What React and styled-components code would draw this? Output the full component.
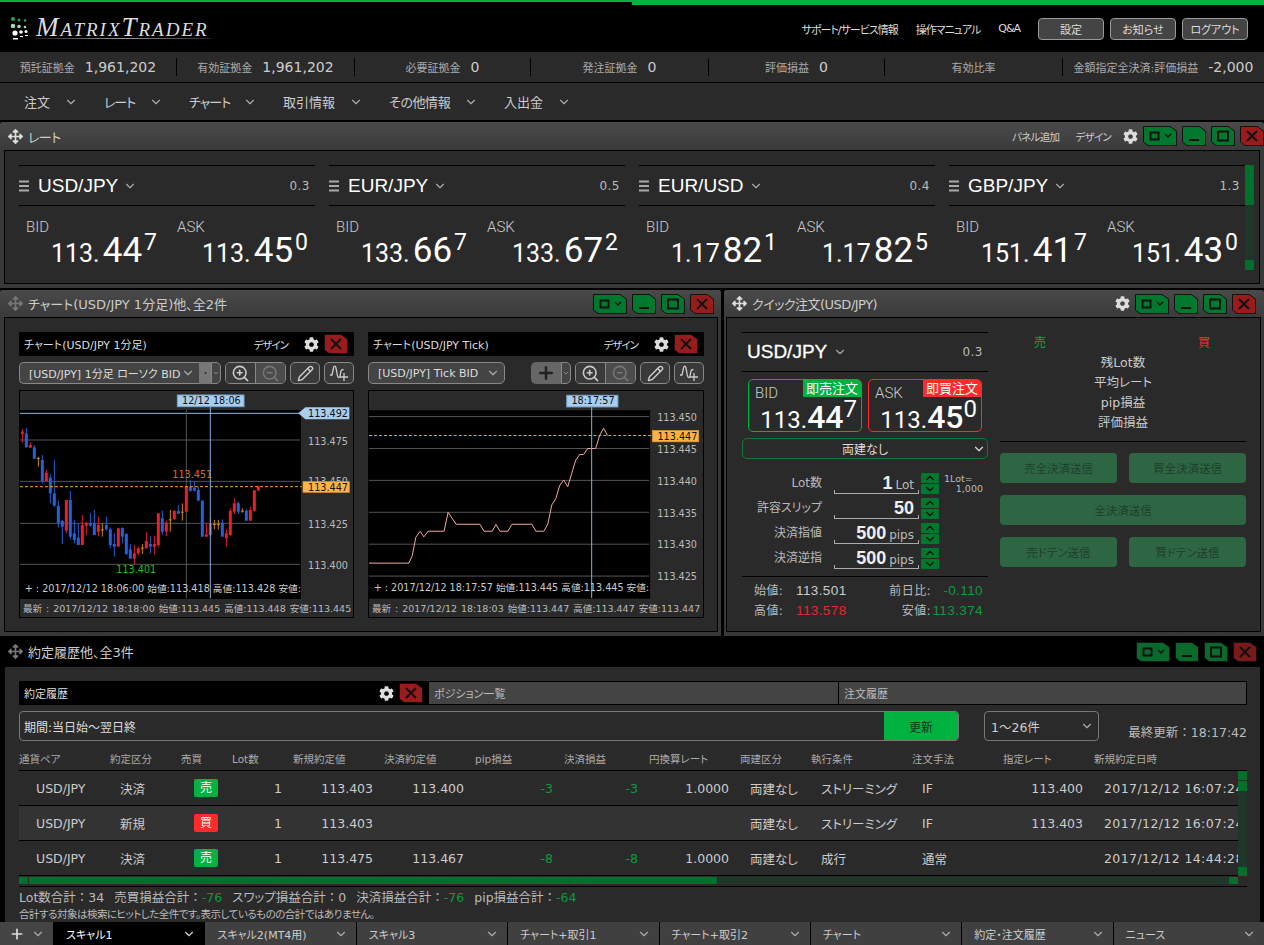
import styled, { createGlobalStyle } from 'styled-components';
import { ChevronDown, ZoomIn, ZoomOut, Pencil, Plus } from 'lucide-react';
import { FaCog, FaArrowsAlt } from 'react-icons/fa';

const FONT = `"DejaVu Sans", "Noto Sans CJK JP", sans-serif`;
const ARIAL = `"Liberation Sans", "Noto Sans CJK JP", sans-serif`;
const THIN = `Roboto, "Liberation Sans", sans-serif`;
const GREEN = '#00b341';
const RED = '#ff2a2a';

const Global = createGlobalStyle`
  html, body { margin: 0; padding: 0; background: #000; }
  body { font-family: ${FONT}; font-feature-settings: "palt"; color: #ccc; }
  * { box-sizing: border-box; }
`;

const stats = [
  ['預託証拠金', '1,961,202'], ['有効証拠金', '1,961,202'], ['必要証拠金', '0'], ['発注証拠金', '0'],
  ['評価損益', '0'], ['有効比率', ''], ['金額指定全決済:評価損益', '-2,000'],
];
// label, letter spacing, width of the label
const menus = [['注文', 0, 26], ['レート', -1, 31], ['チャート', -1, 40], ['取引情報', 0, 52], ['その他情報', -.4, 61], ['入出金', 0, 39]];
const rates = [
  { pair: 'USD/JPY', spread: '0.3', bid: ['113.', '44', '7'], ask: ['113.', '45', '0'] },
  { pair: 'EUR/JPY', spread: '0.5', bid: ['133.', '66', '7'], ask: ['133.', '67', '2'] },
  { pair: 'EUR/USD', spread: '0.4', bid: ['1.17', '82', '1'], ask: ['1.17', '82', '5'] },
  { pair: 'GBP/JPY', spread: '1.3', bid: ['151.', '41', '7'], ask: ['151.', '43', '0'] },
];
const heads = ['通貨ペア', '約定区分', '売買', 'Lot数', '新規約定値', '決済約定値', 'pip損益', '決済損益', '円換算レート', '両建区分', '執行条件', '注文手法', '指定レート', '新規約定日時'];
const trades = [
  ['USD/JPY', '決済', '売', '1', '113.403', '113.400', '-3', '-3', '1.0000', '両建なし', 'ストリーミング', 'IF', '113.400', '2017/12/12 16:07:24'],
  ['USD/JPY', '新規', '買', '1', '113.403', '', '', '', '', '両建なし', 'ストリーミング', 'IF', '113.403', '2017/12/12 16:07:24'],
  ['USD/JPY', '決済', '売', '1', '113.475', '113.467', '-8', '-8', '1.0000', '両建なし', '成行', '通常', '', '2017/12/12 14:44:28'],
];
const tabs = ['スキャル1', 'スキャル2(MT4用)', 'スキャル3', 'チャート+取引1', 'チャート+取引2', 'チャート', '約定・注文履歴', 'ニュース'];

// x, wick top, wick bottom, body top, body bottom, colour (coords are 3x the page)
const candles = [
  [67,418,458,425,432,'r'],[79,413,472,430,472,'b'],[91,457,473,465,473,'r'],[103,465,506,472,506,'b'],[115,500,530,504,506,'o'],
  [127,495,580,510,573,'b'],[139,540,575,548,573,'r'],[151,552,640,563,610,'b'],[163,510,650,610,647,'b'],[175,632,712,648,700,'b'],
  [187,690,762,693,710,'b'],[199,630,730,630,722,'r'],[211,603,748,630,740,'b'],[223,690,760,730,750,'b'],[235,700,765,743,765,'b'],
  [247,675,765,705,765,'r'],[259,695,735,700,707,'r'],[271,670,710,700,707,'b'],[283,660,735,700,735,'b'],[295,680,738,705,725,'r'],
  [307,700,740,718,720,'o'],[319,680,722,705,718,'b'],[331,712,775,718,765,'b'],[343,730,800,762,770,'b'],[355,713,770,715,770,'r'],
  [367,712,760,714,740,'b'],[379,730,795,732,792,'b'],[391,762,806,778,806,'b'],[403,765,822,790,806,'r'],[415,770,795,775,790,'r'],
  [427,762,792,773,775,'o'],[439,725,775,753,775,'r'],[451,738,790,762,770,'b'],[463,738,793,762,770,'r'],[475,670,772,670,765,'r'],
  [487,662,735,685,725,'b'],[499,692,738,698,725,'r'],[511,660,725,688,690,'o'],[523,660,690,663,687,'r'],[535,645,672,663,671,'b'],
  [547,640,692,665,667,'o'],[559,590,665,590,665,'r'],[571,570,605,590,603,'b'],[583,575,605,593,602,'b'],[595,590,632,600,632,'b'],
  [607,630,740,632,740,'b'],[619,700,740,733,740,'r'],[631,685,738,700,735,'r'],[643,690,718,702,704,'o'],[655,690,718,702,704,'o'],
  [667,688,740,698,740,'b'],[679,718,770,730,745,'r'],[691,655,738,663,735,'r'],[703,625,672,640,665,'r'],[715,635,672,640,665,'b'],
  [727,655,668,662,664,'o'],[739,658,692,662,692,'b'],[751,650,692,660,692,'r'],[763,600,665,601,662,'r'],[775,587,602,590,602,'r'],
];
const candleColors = { r: '#e5202a', b: '#2560d8', o: '#c98a10' };
const tickLine = '27,820 147,820 157,798 168,742 181,724 192,741 205,724 253,724 265,667 289,703 361,703 373,724 398,724 409,703 421,724 445,724 457,703 517,703 529,724 553,724 565,703 577,645 589,626 601,586 613,570 625,590 649,510 661,493 673,493 685,475 709,475 721,436 733,414 745,436';

function Gear({ size = 15 }) {
  return <GearWrap><FaCog size={size} /></GearWrap>;
}

function Chev({ size = 14, color = '#aaa' }) {
  return <ChevronDown size={size} color={color} strokeWidth={2} />;
}

function WinBtn({ kind, w = 24, dim }) {
  const fill = kind === 'close' ? (dim ? '#7c1a1a' : '#991b1b') : (dim ? '#0a6a2c' : '#00792e');
  return (
    <svg width={w} height="20" viewBox={`0 0 ${w} 20`}>
      <polygon points={`0.5,0.5 ${w - 7},0.5 ${w - 0.5},5 ${w - 0.5},19.5 5,19.5 0.5,16`} fill={fill} stroke="#111" />
      {kind === 'layout' && <>
        <rect x="7.5" y="6.5" width="8" height="7" fill="none" stroke="#111" strokeWidth="2" />
        <path d="M22 8l3 3 3-3" fill="none" stroke="#111" strokeWidth="1.4" />
      </>}
      {kind === 'min' && <rect x="7" y="13" width="10" height="2" fill="#111" />}
      {kind === 'max' && <rect x="7" y="5.5" width="10" height="9" fill="none" stroke="#111" strokeWidth="2" />}
      {kind === 'close' && <path d="M7 5l10 10M17 5L7 15" stroke="#111" strokeWidth="2" />}
    </svg>
  );
}

function WinButtons({ dim }) {
  return (
    <WinGroup>
      <WinBtn kind="layout" w={34} dim={dim} />
      <WinBtn kind="min" dim={dim} />
      <WinBtn kind="max" dim={dim} />
      <WinBtn kind="close" dim={dim} />
    </WinGroup>
  );
}

function Hamburger() {
  return (
    <svg width="10" height="12" viewBox="0 0 10 12">
      <path d="M0 1.5h10M0 6h10M0 10.5h10" stroke="#aaa" strokeWidth="1.8" />
    </svg>
  );
}

function DrawIcon() {
  return (
    <svg width="20" height="18" viewBox="0 0 20 18" fill="none" stroke="#ccc" strokeWidth="1.3">
      <path d="M1 11h2l1.500-7c.5-2.500 2-2.500 2.500 0l1.500 8c.4 2 2 2 2.500 0l1-5c.3-1.500 1.500-1.500 2.500-1.500" />
      <path d="M15 9v8M11 13h8" />
    </svg>
  );
}

function Logo() {
  return (
    <LogoWrap>
      <svg width="20" height="24" viewBox="0 0 20 24">
        <g fill="#2f9e55"><circle cx="3" cy="3" r="2" /><circle cx="9" cy="4" r="1.500" /><circle cx="15" cy="4.500" r="1.300" /></g>
        <g fill="#a6d8b4"><circle cx="3" cy="10" r="2.300" /><circle cx="9" cy="10.500" r="1.800" /><circle cx="15" cy="11" r="1.300" /></g>
        <g fill="#fff"><circle cx="5" cy="17" r="2.600" /><circle cx="11" cy="16" r="1.800" /><circle cx="16" cy="15.500" r="1.500" /><rect x="3" y="22" width="5" height="1.500" /><rect x="10" y="20" width="3" height="1" /><rect x="15" y="19" width="3" height="1" /></g>
      </svg>
      <LogoText>MatrixTrader</LogoText>
    </LogoWrap>
  );
}

function Price({ parts, big = 35, small = 25, sup = 23, raise = 12, weight = 400, flush }) {
  return (
    <PriceText $small={small}>
      {parts[0]}<PriceBig $size={big} $weight={weight} $flush={flush}>{parts[1]}</PriceBig><PriceSup $size={sup} $raise={raise}>{parts[2]}</PriceSup>
    </PriceText>
  );
}

function RateCard({ pair, spread, bid, ask }) {
  return (
    <Card>
      <CardHead>
        <Hamburger />
        <PairName>{pair}</PairName>
        <Chev />
        <Spread>{spread}</Spread>
      </CardHead>
      <Quotes>
        <Quote><QuoteLabel>BID</QuoteLabel><Price parts={bid} /></Quote>
        <Quote><QuoteLabel>ASK</QuoteLabel><Price parts={ask} /></Quote>
      </Quotes>
    </Card>
  );
}

function CandleChart() {
  return (
    <PlotSvg viewBox="57 300 1002 627">
      <defs><clipPath id="plotA"><rect x="60" y="360" width="843" height="567" /></clipPath></defs>
      <rect x="60" y="360" width="843" height="567" fill="#000" />
      {[450, 574, 700, 823].map(y => <line key={y} x1="60" x2="900" y1={y} y2={y} stroke="#555" strokeWidth="3" />)}
      <line x1="60" x2="900" y1="370" y2="370" stroke="#8fb8e0" strokeWidth="3" />
      <line x1="559" x2="559" y1="360" y2="925" stroke="#555" strokeWidth="3" />
      <text x="924" y="465">113.475</text>
      <text x="924" y="586">113.450</text>
      <text x="924" y="714">113.425</text>
      <text x="924" y="837">113.400</text>
      {candles.map(([x, wt, wb, bt, bb, c]) => (
        <g key={x} fill={candleColors[c]}>
          <rect x={x - 1.500} y={wt} width="3" height={wb - wt} />
          <rect x={x - 4.500} y={bt} width="9" height={Math.max(bb - bt, 3)} />
        </g>
      ))}
      <line x1="60" x2="905" y1="590" y2="590" stroke="#ff9d1e" strokeWidth="3" strokeDasharray="9 6" />
      <line x1="631" x2="631" y1="345" y2="925" stroke="#7fb0e4" strokeWidth="3" />
      <text x="517" y="563" fill="#e06a10">113.451</text>
      <text x="349" y="848" fill="#18c218">113.401</text>
      <text x="74" y="905" fill="#ccc" clipPath="url(#plotA)">+ : 2017/12/12 18:06:00 始値:113.418 高値:113.428 安値:113.410</text>
      <rect x="532" y="315" width="200" height="35" fill="#a9cdec" stroke="#7aa6d0" strokeWidth="3" />
      <text x="546" y="342" fill="#111">12/12 18:06</text>
      <polygon points="895,370 916,352 1048,352 1048,388 916,388" fill="#a9cdec" />
      <text x="924" y="382" fill="#111">113.492</text>
      <rect x="909" y="575" width="139" height="32" fill="#ffb347" stroke="#e8962a" strokeWidth="2" />
      <text x="924" y="602" fill="#111">113.447</text>
    </PlotSvg>
  );
}

function TickChart() {
  return (
    <PlotSvg viewBox="24 300 1008 627">
      <defs><clipPath id="plotB"><rect x="27" y="360" width="846" height="567" /></clipPath></defs>
      <rect x="27" y="360" width="846" height="567" fill="#000" />
      {[379, 475, 571, 667, 763, 859].map(y => <line key={y} x1="27" x2="870" y1={y} y2={y} stroke="#555" strokeWidth="3" />)}
      {['113.450', '113.445', '113.440', '113.435', '113.430', '113.425'].map((t, i) => <text key={t} x="894" y={392 + i * 96}>{t}</text>)}
      <polyline points={tickLine} fill="none" stroke="#f4a8a0" strokeWidth="3" />
      <line x1="27" x2="878" y1="436" y2="436" stroke="#ff9d1e" strokeWidth="3" strokeDasharray="9 6" />
      <line x1="697" x2="697" y1="345" y2="925" stroke="#7fb0e4" strokeWidth="3" />
      <text x="41" y="905" fill="#ccc" clipPath="url(#plotB)">+ : 2017/12/12 18:17:57 始値:113.445 高値:113.445 安値:113.445</text>
      <rect x="622" y="315" width="154" height="35" fill="#a9cdec" stroke="#7aa6d0" strokeWidth="3" />
      <text x="636" y="342" fill="#111">18:17:57</text>
      <rect x="880" y="421" width="139" height="34" fill="#ffb347" stroke="#e8962a" strokeWidth="2" />
      <text x="895" y="449" fill="#111">113.447</text>
    </PlotSvg>
  );
}

function ChartWindow({ title, tick, children, latest }) {
  return (
    <ChartCol>
      <ChartHead>
        <span>{title}</span>
        <ChartHeadRight>
          <ChartDesign>デザイン</ChartDesign>
          <Gear />
          <WinBtn kind="close" />
        </ChartHeadRight>
      </ChartHead>
      <ChartTools>
        {tick ? (
          <>
            <SelectBox $w={137}>[USD/JPY] Tick BID<Chev /></SelectBox>
            <SplitBtn><Plus size={20} color="#222" strokeWidth={3} /></SplitBtn>
            <SplitArrow><Chev size={12} /></SplitArrow>
          </>
        ) : (
          <>
            <SelectBox $w={181} $joined>[USD/JPY] 1分足 ローソク BID<Chev /></SelectBox>
            <DotBtn>·</DotBtn>
            <SplitArrow><Chev size={12} /></SplitArrow>
          </>
        )}
        <ZoomGroup>
          <ZoomBtn><ZoomIn size={19} color="#ccc" /></ZoomBtn>
          <ZoomBtn $off><ZoomOut size={19} color="#777" /></ZoomBtn>
        </ZoomGroup>
        <ToolBtn><Pencil size={17} color="#ccc" /></ToolBtn>
        <ToolBtn><DrawIcon /></ToolBtn>
      </ChartTools>
      <ChartBox>
        {children}
        <ChartStatus>{latest}</ChartStatus>
      </ChartBox>
    </ChartCol>
  );
}

function Stepper() {
  return (
    <StepGroup>
      <StepBtn><ChevronDown size={14} color="#111" strokeWidth={2} style={{ transform: 'rotate(180deg)' }} /></StepBtn>
      <StepBtn><ChevronDown size={14} color="#111" strokeWidth={2} /></StepBtn>
    </StepGroup>
  );
}

function FormRow({ label, value, unit, note }) {
  return (
    <FormLine>
      <FormLabel>{label}</FormLabel>
      <FormInput><FormValue>{value}</FormValue>{unit && <FormUnit>{unit}</FormUnit>}</FormInput>
      <Stepper />
      {note && <LotNote>1Lot=<b>1,000</b></LotNote>}
    </FormLine>
  );
}

function QuickOrder() {
  return (
    <QuickBody>
      <QuickLeft>
        <QuickHead>
          <QuickPair>USD/JPY</QuickPair>
          <Chev />
          <Spread>0.3</Spread>
        </QuickHead>
        <OrderBoxes>
          <OrderBox $color={GREEN}>
            <OrderTag $color={GREEN}>即売注文</OrderTag>
            <OrderLabel>BID</OrderLabel>
            <Price parts={['113.', '44', '7']} big={32} small={24} sup={24} raise={11} weight={500} flush />
          </OrderBox>
          <OrderBox $color={RED}>
            <OrderTag $color={RED}>即買注文</OrderTag>
            <OrderLabel>ASK</OrderLabel>
            <Price parts={['113.', '45', '0']} big={32} small={24} sup={24} raise={11} weight={500} flush />
          </OrderBox>
        </OrderBoxes>
        <HedgeSelect>両建なし<HedgeChev><Chev color="#ddd" /></HedgeChev></HedgeSelect>
        <Form>
          <FormRow label="Lot数" value="1" unit="Lot" note />
          <FormRow label="許容スリップ" value="50" />
          <FormRow label="決済指値" value="500" unit="pips" />
          <FormRow label="決済逆指" value="500" unit="pips" />
        </Form>
        <OhlcGrid>
          <OhlcLabel>始値:</OhlcLabel><OhlcValue $left>113.501</OhlcValue>
          <OhlcLabel>前日比:</OhlcLabel><OhlcValue $color="#0d9a3e">-0.110</OhlcValue>
          <OhlcLabel>高値:</OhlcLabel><OhlcValue $left $color="#e8282c">113.578</OhlcValue>
          <OhlcLabel>安値:</OhlcLabel><OhlcValue $color="#0d9a3e">113.374</OhlcValue>
        </OhlcGrid>
      </QuickLeft>
      <QuickRight>
        <SideRow><SideMark $color={GREEN}>売</SideMark><SideMark $color={RED}>買</SideMark></SideRow>
        <PosLine>残Lot数</PosLine>
        <PosLine>平均レート</PosLine>
        <PosLine>pip損益</PosLine>
        <PosLine>評価損益</PosLine>
        <PosRule />
        <SendGrid>
          <SendBtn>売全決済送信</SendBtn>
          <SendBtn>買全決済送信</SendBtn>
          <SendBtn $wide>全決済送信</SendBtn>
          <SendBtn>売ドテン送信</SendBtn>
          <SendBtn>買ドテン送信</SendBtn>
        </SendGrid>
      </QuickRight>
    </QuickBody>
  );
}

function TradeRow({ row, index }) {
  return (
    <Row $alt={index === 1}>
      {row.map((v, i) => {
        if (i === 2) return <Cell key={i} $pad="13px"><Badge $buy={v === '買'}>{v}</Badge></Cell>;
        if (i === 0) return <Cell key={i} $pad="17px">{v}</Cell>;
        const right = [3, 4, 5, 6, 7, 8, 12].includes(i);
        return <Cell key={i} $right={right} $pad={right ? '11px' : '10px'} $green={i === 6 || i === 7} $wide={i === 13}>{v}</Cell>;
      })}
    </Row>
  );
}

export default function App() {
  return (
    <>
      <Global />
      <Page>
        <Accent><AccentLeft /><AccentRight /></Accent>
        <Header>
          <Logo />
          <HeaderRight>
            <HeadLink>サポート/サービス情報</HeadLink>
            <HeadLink>操作マニュアル</HeadLink>
            <HeadLink>Q&A</HeadLink>
            <HeadBtns>
              <HeadBtn>設定</HeadBtn>
              <HeadBtn>お知らせ</HeadBtn>
              <HeadBtn>ログアウト</HeadBtn>
            </HeadBtns>
          </HeaderRight>
        </Header>
        <StatBar>
          {stats.map(([label, value]) => (
            <Stat key={label}><StatLabel>{label}</StatLabel>{value && <StatValue>{value}</StatValue>}</Stat>
          ))}
        </StatBar>
        <MenuBar>
          {menus.map(([m, sp, w]) => <MenuItem key={m}><MenuText $sp={sp} $w={w}>{m}</MenuText><Chev /></MenuItem>)}
        </MenuBar>

        <RatePanel>
          <TitleBar>
            <TitleLeft $tight><FaArrowsAlt size={15} color="#ddd" /><span>レート</span></TitleLeft>
            <TitleRight>
              <TitleLink>パネル追加</TitleLink>
              <TitleLink>デザイン</TitleLink>
              <Gear />
              <WinButtons />
            </TitleRight>
          </TitleBar>
          <RateBody>
            <RateCards>{rates.map(r => <RateCard key={r.pair} {...r} />)}</RateCards>
            <RateScroll><ScrollThumb $h={40} /><ScrollThumb $h={10} /></RateScroll>
          </RateBody>
        </RatePanel>

        <MidRow>
          <MidPanel>
            <TitleBar $h={27}>
              <TitleLeft><FaArrowsAlt size={15} color="#777" /><span>チャート(USD/JPY 1分足)他、全2件</span></TitleLeft>
              <TitleRight $end="7px"><WinButtons /></TitleRight>
            </TitleBar>
            <ChartsBody>
              <ChartWindow title="チャート(USD/JPY 1分足)" latest="最新 : 2017/12/12 18:18:00 始値:113.445 高値:113.448 安値:113.445">
                <CandleChart />
              </ChartWindow>
              <ChartWindow tick title="チャート(USD/JPY Tick)" latest="最新 : 2017/12/12 18:18:03 始値:113.447 高値:113.447 安値:113.447">
                <TickChart />
              </ChartWindow>
            </ChartsBody>
          </MidPanel>
          <MidPanel>
            <TitleBar $h={27}>
              <TitleLeft $tight><FaArrowsAlt size={15} color="#ddd" /><span>クイック注文(USD/JPY)</span></TitleLeft>
              <TitleRight $end="8px"><Gear /><WinButtons /></TitleRight>
            </TitleBar>
            <QuickOrder />
          </MidPanel>
        </MidRow>

        <HistoryPanel>
          <HistoryTitle>
            <TitleLeft><FaArrowsAlt size={15} color="#777" /><span>約定履歴他、全3件</span></TitleLeft>
            <TitleRight $end="7px"><WinButtons dim /></TitleRight>
          </HistoryTitle>
          <HistoryBody>
            <SubTabs>
              <SubTab $active>約定履歴<SubTabTools><Gear /><WinBtn kind="close" /></SubTabTools></SubTab>
              <SubTab>ポジション一覧</SubTab>
              <SubTab>注文履歴</SubTab>
            </SubTabs>
            <FilterRow>
              <PeriodBox><PeriodText>期間:当日始〜翌日終</PeriodText><UpdateBtn>更新</UpdateBtn></PeriodBox>
              <RangeSelect>1〜26件<Chev /></RangeSelect>
              <LastUpdate>最終更新：18:17:42</LastUpdate>
            </FilterRow>
            <HeadRow>{heads.map(h => <HeadCell key={h}>{h}</HeadCell>)}</HeadRow>
            <TableWrap>
              <Rows>{trades.map((t, i) => <TradeRow key={i} row={t} index={i} />)}</Rows>
              <VScroll>
                <ScrollThumb $h={9} /><ScrollThumb $h={10} />
                <VScrollEnd><ScrollThumb $h={9} /></VScrollEnd>
              </VScroll>
            </TableWrap>
            <HScroll>
              <ScrollThumb $w={9} /><HThumb /><HEnd />
            </HScroll>
            <Summary>
              <span>Lot数合計：34</span>
              <span>売買損益合計：<Minus>-76</Minus></span>
              <span><Kana>スワップ</Kana>損益合計：0</span>
              <span>決済損益合計：<Minus>-76</Minus></span>
              <span>pip損益合計：<Minus>-64</Minus></span>
            </Summary>
            <Note>合計する対象は検索にヒットした全件です。表示しているものの合計ではありません。</Note>
          </HistoryBody>
        </HistoryPanel>

        <TabBar>
          <AddTab><Plus size={16} color="#ddd" strokeWidth={2.500} /><Chev /></AddTab>
          {tabs.map((t, i) => <BottomTab key={t} $active={i === 0}>{t}<Chev color={i === 0 ? '#ccc' : '#aaa'} /></BottomTab>)}
        </TabBar>
      </Page>
    </>
  );
}

const Page = styled.div`
  width: 1264px;
  height: 945px;
  overflow: hidden;
  background: #000;
  display: flex;
  flex-direction: column;
  font-size: 12px;
`;
const Accent = styled.div`
  display: flex;
  height: 5px;
  flex: none;
`;
const AccentLeft = styled.div`
  width: 632px;
  height: 2px;
  background: ${GREEN};
`;
const AccentRight = styled.div`
  flex: 1;
  background: ${GREEN};
`;
const Header = styled.div`
  height: 47px;
  flex: none;
  display: flex;
  justify-content: space-between;
  align-items: center;
  padding: 0 16px 0 10px;
`;
const LogoWrap = styled.div`
  display: flex;
  align-items: flex-start;
  gap: 6px;
  margin-bottom: 2px;
`;
const LogoText = styled.div`
  font-family: "Liberation Serif", serif;
  font-style: italic;
  font-variant: small-caps;
  font-size: 27px;
  line-height: 22px;
  width: 175px;
  letter-spacing: 2px;
  white-space: nowrap;
  color: #ddd;
  border-bottom: 1px solid transparent;
  border-image: linear-gradient(90deg, #222, #999 50%, #222) 1;
`;
const HeaderRight = styled.div`
  display: flex;
  align-items: center;
`;
const HeadLink = styled.span`
  color: #ddd;
  font-size: 11px;
  letter-spacing: -1px;
  margin-right: 18px;
`;
const HeadBtns = styled.div`
  display: flex;
  gap: 6px;
`;
const HeadBtn = styled.div`
  width: 66px;
  height: 22px;
  display: flex;
  align-items: center;
  justify-content: center;
  background: #444;
  border: 1px solid #999;
  border-radius: 4px;
  color: #ddd;
  font-size: 11px;
`;
const StatBar = styled.div`
  height: 31px;
  flex: none;
  background: #2a2a2a;
  border-bottom: 1px solid #000;
  display: grid;
  grid-template-columns: 177px 178px 176px 178px 176px 178px 1fr;
  align-items: center;
`;
const Stat = styled.div`
  height: 18px;
  display: flex;
  align-items: center;
  justify-content: center;
  gap: 10px;
  border-right: 1px solid #000;
  &:last-child { border-right: 0; }
`;
const StatLabel = styled.span`
  font-size: 11px;
  color: #aaa;
`;
const StatValue = styled.span`
  font-size: 14px;
  color: #ccc;
`;
const MenuBar = styled.div`
  height: 37px;
  flex: none;
  background: #2a2a2a;
  display: flex;
  align-items: center;
  padding-left: 24px;
  gap: 26px;
  margin-bottom: 2px;
`;
const MenuItem = styled.div`
  display: flex;
  align-items: center;
  gap: 14px;
  font-size: 13px;
  color: #ccc;
`;
const MenuText = styled.span`
  width: ${p => p.$w}px;
  letter-spacing: ${p => p.$sp}px;
  white-space: nowrap;
`;
const RatePanel = styled.div`
  height: 166px;
  flex: none;
  background: #383838;
  border-radius: 3px 3px 0 0;
  display: flex;
  flex-direction: column;
  margin-bottom: 2px;
`;
const TitleBar = styled.div`
  height: ${p => p.$h || 28}px;
  flex: none;
  display: flex;
  justify-content: space-between;
  align-items: center;
  background: linear-gradient(#4a4a4a, #3a3a3a);
  border-radius: 3px 3px 0 0;
`;
const HistoryTitle = styled.div`
  height: 30px;
  flex: none;
  display: flex;
  justify-content: space-between;
  align-items: center;
  background: #000;
  padding-bottom: 1px;
`;
const TitleLeft = styled.div`
  display: flex;
  align-items: center;
  gap: 5px;
  padding-left: 8px;
  font-size: 13px;
  letter-spacing: ${p => (p.$tight ? '-.5px' : '0')};
  color: #ccc;
`;
const TitleRight = styled.div`
  display: flex;
  align-items: center;
  padding-right: ${p => p.$end || '0'};
`;
const TitleLink = styled.span`
  font-size: 10.500px;
  letter-spacing: -.7px;
  color: #ccc;
  margin-right: 16px;
  & + & { margin-right: 12px; }
`;
const GearWrap = styled.span`
  display: inline-flex;
  color: #ddd;
`;
const WinGroup = styled.div`
  display: flex;
  gap: 5px;
  margin-left: 5px;
`;
const RateBody = styled.div`
  flex: 1;
  margin: 0 4px 4px;
  background: #2a2a2a;
  border: 1px solid #000;
  padding: 14px 5px 0 14px;
  display: flex;
`;
const RateCards = styled.div`
  flex: 1;
  display: grid;
  grid-template-columns: repeat(4, 296px);
  column-gap: 14px;
`;
const Card = styled.div`
  display: flex;
  flex-direction: column;
`;
const CardHead = styled.div`
  height: 41px;
  display: flex;
  align-items: center;
  border-top: 1px solid #000;
  border-bottom: 1px solid #000;
  padding-right: 5px;
`;
const PairName = styled.span`
  font-family: ${ARIAL};
  font-size: 19px;
  color: #fff;
  margin: 0 5px 0 9px;
`;
const Spread = styled.span`
  margin-left: auto;
  font-size: 12px;
  letter-spacing: .5px;
  color: #bbb;
`;
const Quotes = styled.div`
  display: grid;
  grid-template-columns: 131px 131px;
  column-gap: 20px;
  padding: 14px 0 0 7px;
`;
const Quote = styled.div`
  display: flex;
  flex-direction: column;
`;
const QuoteLabel = styled.div`
  font-family: ${THIN};
  font-weight: 300;
  font-size: 15px;
  line-height: 15px;
  color: #ccc;
`;
const PriceText = styled.div`
  font-family: ${THIN};
  font-weight: 400;
  color: #fff;
  font-size: ${p => p.$small}px;
  line-height: 32px;
  text-align: right;
  white-space: nowrap;
`;
const PriceBig = styled.span`
  font-size: ${p => p.$size}px;
  font-weight: ${p => p.$weight};
  margin: ${p => (p.$flush ? '0' : '0 2px 0 3px')};
`;
const PriceSup = styled.span`
  font-size: ${p => p.$size}px;
  vertical-align: ${p => p.$raise}px;
  line-height: 0;
`;
const RateScroll = styled.div`
  width: 9px;
  height: 105px;
  background: #20362a;
  display: flex;
  flex-direction: column;
  justify-content: space-between;
`;
const ScrollThumb = styled.div`
  flex: none;
  width: ${p => (p.$w ? `${p.$w}px` : '100%')};
  height: ${p => (p.$h ? `${p.$h}px` : '100%')};
  background: #00702a;
`;
const MidRow = styled.div`
  height: 346px;
  flex: none;
  display: grid;
  grid-template-columns: 721px 540px;
  column-gap: 3px;
  margin-bottom: 1px;
`;
const MidPanel = styled.div`
  background: #383838;
  border-radius: 3px 3px 0 0;
  display: flex;
  flex-direction: column;
  min-width: 0;
`;
const ChartsBody = styled.div`
  margin: 0 3px 4px 4px;
  flex: 1;
  background: #2a2a2a;
  border: 1px solid #000;
  padding: 14px 13px 0 14px;
  display: grid;
  grid-template-columns: 335px 336px;
  column-gap: 14px;
`;
const ChartCol = styled.div`
  display: flex;
  flex-direction: column;
  min-width: 0;
`;
const ChartHead = styled.div`
  height: 24px;
  flex: none;
  background: #000;
  display: flex;
  align-items: center;
  justify-content: space-between;
  padding: 0 6px 0 5px;
  font-size: 11px;
  color: #ddd;
`;
const ChartHeadRight = styled.div`
  display: flex;
  align-items: center;
  font-size: 10.500px;
  & svg:last-child { margin-left: 5px; }
`;
const ChartDesign = styled.span`
  letter-spacing: -1px;
  margin-right: 11px;
`;
const ChartTools = styled.div`
  height: 22px;
  flex: none;
  margin: 6px 0;
  display: flex;
  align-items: stretch;
`;
const SelectBox = styled.div`
  width: ${p => p.$w}px;
  display: flex;
  align-items: center;
  justify-content: space-between;
  padding: 0 4px 0 9px;
  background: #444;
  border: 1px solid #888;
  border-radius: ${p => (p.$joined ? '5px 0 0 5px' : '5px')};
  border-right-width: ${p => (p.$joined ? 0 : 1)}px;
  font-size: 11px;
  color: #ddd;
  white-space: nowrap;
`;
const DotBtn = styled.div`
  width: 12px;
  background: #777;
  color: #222;
  font-size: 14px;
  display: flex;
  align-items: center;
  justify-content: center;
`;
const SplitBtn = styled.div`
  width: 30px;
  margin-left: auto;
  background: #666;
  border-radius: 5px 0 0 5px;
  display: flex;
  align-items: center;
  justify-content: center;
`;
const SplitArrow = styled.div`
  width: 10px;
  background: #444;
  border: 1px solid #888;
  border-radius: 0 5px 5px 0;
  display: flex;
  align-items: center;
  justify-content: center;
  overflow: hidden;
`;
const ZoomGroup = styled.div`
  width: 61px;
  margin-left: 4px;
  display: flex;
  border: 1px solid #888;
  border-radius: 5px;
  overflow: hidden;
`;
const ZoomBtn = styled.div`
  flex: 1;
  background: ${p => (p.$off ? '#4c4c4c' : '#3a3a3a')};
  display: flex;
  align-items: center;
  justify-content: center;
  & + & { border-left: 1px solid #888; }
`;
const ToolBtn = styled.div`
  width: 30px;
  margin-left: 4px;
  background: #3a3a3a;
  border: 1px solid #888;
  border-radius: 5px;
  display: flex;
  align-items: center;
  justify-content: center;
`;
const ChartBox = styled.div`
  height: 228px;
  flex: none;
  border: 1px solid #000;
  background: #2a2a2a;
  display: flex;
  flex-direction: column;
  overflow: hidden;
`;
const PlotSvg = styled.svg`
  display: block;
  width: calc(100% + 1px);
  height: 209px;
  flex: none;
  margin: -1px 0 0 -1px;
  fill: #bbb;
  font-family: ${FONT};
  font-size: 29px;
`;
const ChartStatus = styled.div`
  padding-left: 3px;
  font-size: 9.500px;
  line-height: 19px;
  word-spacing: 1px;
  color: #bbb;
  white-space: pre;
  overflow: hidden;
`;
const QuickBody = styled.div`
  margin: 0 3px 4px 2px;
  flex: 1;
  background: #2a2a2a;
  border: 1px solid #000;
  padding: 14px 15px 0 15px;
  display: grid;
  grid-template-columns: 246px 246px;
  column-gap: 12px;
`;
const QuickLeft = styled.div`
  display: flex;
  flex-direction: column;
`;
const QuickHead = styled.div`
  height: 40px;
  display: flex;
  align-items: center;
  gap: 6px;
  padding: 0 5px;
  border-top: 1px solid #000;
  border-bottom: 1px solid #000;
`;
const QuickPair = styled.span`
  font-family: ${ARIAL};
  font-size: 19px;
  font-weight: 400;
  color: #fff;
  -webkit-text-stroke: .3px #fff;
`;
const OrderBoxes = styled.div`
  display: grid;
  grid-template-columns: 114px 114px;
  column-gap: 6px;
  padding: 7px 0 0 6px;
`;
const OrderBox = styled.div`
  height: 53px;
  border: 1px solid ${p => p.$color};
  border-radius: 5px;
  position: relative;
  padding: 0 4px 0 6px;
`;
const OrderTag = styled.div`
  position: absolute;
  top: 0;
  right: 0;
  width: 58px;
  height: 17px;
  background: ${p => p.$color};
  border-radius: 0 4px 0 0;
  color: #fff;
  font-size: 13px;
  line-height: 17px;
  text-align: center;
  white-space: nowrap;
`;
const OrderLabel = styled.div`
  font-family: ${THIN};
  font-weight: 300;
  font-size: 15px;
  line-height: 15px;
  margin-top: 6px;
  color: #ccc;
`;
const HedgeSelect = styled.div`
  height: 21px;
  margin-top: 6px;
  border: 1px solid #0a7a35;
  border-radius: 5px;
  display: flex;
  align-items: center;
  justify-content: center;
  position: relative;
  font-size: 12px;
  color: #ddd;
`;
const HedgeChev = styled.span`
  position: absolute;
  right: 1px;
  top: 3px;
  display: flex;
`;
const Form = styled.div`
  margin-top: 14px;
  display: flex;
  flex-direction: column;
  gap: 4px;
`;
const FormLine = styled.div`
  height: 21px;
  display: flex;
  align-items: flex-end;
`;
const FormLabel = styled.div`
  width: 80px;
  font-size: 12px;
  line-height: 21px;
  text-align: right;
  color: #bbb;
  white-space: nowrap;
`;
const FormInput = styled.div`
  margin-left: 12px;
  width: 85px;
  height: 21px;
  border-style: solid;
  border-width: 0 1px 1px;
  border-image: linear-gradient(transparent 80%, #aaa 80%) 1;
  display: flex;
  align-items: baseline;
  justify-content: flex-end;
  gap: 3px;
  padding-right: 4px;
  white-space: nowrap;
`;
const FormValue = styled.span`
  font-family: ${ARIAL};
  font-size: 18px;
  line-height: 21px;
  font-weight: 700;
  color: #eee;
`;
const FormUnit = styled.span`
  font-size: 12px;
  color: #bbb;
`;
const StepGroup = styled.div`
  width: 18px;
  margin-left: 2px;
  display: flex;
  flex-direction: column;
  gap: 1px;
`;
const StepBtn = styled.div`
  height: 10px;
  background: #00792e;
  border-radius: 1px;
  display: flex;
  align-items: center;
  justify-content: center;
  overflow: hidden;
`;
const LotNote = styled.div`
  margin-left: 5px;
  width: 39px;
  font-size: 9.500px;
  line-height: 10px;
  color: #bbb;
  & b { display: block; text-align: right; font-weight: 400; white-space: nowrap; }
`;
const OhlcGrid = styled.div`
  margin-top: 7px;
  padding-top: 6px;
  border-top: 1px solid #000;
  display: grid;
  grid-template-columns: 42px 60px 75px 1fr;
  row-gap: 4px;
  padding-left: 12px;
  padding-right: 5px;
  font-family: ${ARIAL};
  font-size: 13.500px;
  line-height: 16px;
  letter-spacing: .4px;
`;
const OhlcLabel = styled.span`
  color: #bbb;
  text-align: right;
  font-family: ${FONT};
  font-size: 12px;
  &:nth-child(1), &:nth-child(5) { text-align: left; }
`;
const OhlcValue = styled.span`
  color: ${p => p.$color || '#ccc'};
  text-align: ${p => (p.$left ? 'left' : 'right')};
`;
const QuickRight = styled.div`
  display: flex;
  flex-direction: column;
  align-items: stretch;
  padding-top: 1px;
`;
const SideRow = styled.div`
  display: flex;
  justify-content: space-between;
  padding: 0 36px 0 34px;
  line-height: 20px;
`;
const SideMark = styled.span`
  color: ${p => p.$color};
  font-size: 12px;
`;
const PosLine = styled.div`
  font-size: 12.500px;
  line-height: 20px;
  text-align: center;
  color: #ccc;
`;
const PosRule = styled.div`
  height: 1px;
  background: #000;
  margin-top: 8px;
`;
const SendGrid = styled.div`
  margin-top: 11px;
  display: grid;
  grid-template-columns: 117px 117px;
  justify-content: space-between;
  row-gap: 12px;
`;
const SendBtn = styled.div`
  height: 30px;
  ${p => p.$wide && 'grid-column: 1 / -1;'}
  background: #2e6644;
  border-radius: 4px;
  color: #1d3f2b;
  font-size: 11.500px;
  display: flex;
  align-items: center;
  justify-content: center;
`;
const HistoryPanel = styled.div`
  height: 285px;
  flex: none;
  background: #000;
  display: flex;
  flex-direction: column;
`;
const HistoryBody = styled.div`
  flex: 1;
  margin: 0 4px 0 5px;
  background: #2a2a2a;
  padding: 14px 13px 0 14px;
  display: flex;
  flex-direction: column;
`;
const SubTabs = styled.div`
  height: 24px;
  flex: none;
  display: grid;
  grid-template-columns: 410px 410px 1fr;
  font-size: 11px;
`;
const SubTab = styled.div`
  background: ${p => (p.$active ? '#000' : '#444')};
  color: ${p => (p.$active ? '#ddd' : '#bbb')};
  border: solid #000;
  border-width: 1px 1px 1px 0;
  display: flex;
  align-items: center;
  justify-content: space-between;
  padding: 0 5px;
`;
const SubTabTools = styled.div`
  display: flex;
  align-items: center;
  gap: 5px;
`;
const FilterRow = styled.div`
  height: 30px;
  flex: none;
  margin-top: 6px;
  display: flex;
  align-items: stretch;
`;
const PeriodBox = styled.div`
  width: 940px;
  display: flex;
  justify-content: space-between;
  border: 1px solid #777;
  border-radius: 4px;
  overflow: hidden;
`;
const PeriodText = styled.span`
  align-self: center;
  padding-left: 4px;
  font-size: 12px;
  color: #ddd;
`;
const UpdateBtn = styled.div`
  width: 74px;
  background: ${GREEN};
  color: #14301f;
  font-size: 12px;
  display: flex;
  align-items: center;
  justify-content: center;
`;
const RangeSelect = styled.div`
  width: 115px;
  margin-left: 25px;
  border: 1px solid #777;
  border-radius: 4px;
  display: flex;
  align-items: center;
  justify-content: space-between;
  padding: 0 4px 0 6px;
  font-size: 12.500px;
  color: #ccc;
`;
const LastUpdate = styled.span`
  margin-left: auto;
  align-self: flex-end;
  font-size: 12.500px;
  font-feature-settings: normal;
  color: #bbb;
  white-space: nowrap;
  line-height: 16px;
`;
const COLS = '91px 71px 51px 61px 91px 91px 89px 85px 91px 71px 101px 91px 91px 1fr';
const HeadRow = styled.div`
  height: 30px;
  flex: none;
  display: grid;
  grid-template-columns: ${COLS};
  align-items: end;
  padding-bottom: 4px;
  border-bottom: 1px solid #000;
`;
const HeadCell = styled.span`
  font-size: 10.500px;
  color: #aaa;
  white-space: nowrap;
`;
const TableWrap = styled.div`
  flex: none;
  display: flex;
  height: 105px;
`;
const Rows = styled.div`
  width: 1219px;
  overflow: hidden;
`;
const Row = styled.div`
  height: 35px;
  display: grid;
  grid-template-columns: ${COLS};
  width: 1228px;
  align-items: center;
  background: ${p => (p.$alt ? '#333' : '#2a2a2a')};
  border-bottom: 1px solid #000;
`;
const Cell = styled.span`
  font-size: 12.500px;
  color: ${p => (p.$green ? '#0d9a3e' : '#ccc')};
  text-align: ${p => (p.$right ? 'right' : 'left')};
  padding-left: ${p => (p.$right ? 0 : p.$pad)};
  padding-right: ${p => (p.$right ? p.$pad : 0)};
  letter-spacing: ${p => (p.$wide ? '.4px' : '0')};
  white-space: nowrap;
`;
const Badge = styled.span`
  display: block;
  width: 24px;
  height: 18px;
  border-radius: 2px;
  background: ${p => (p.$buy ? RED : GREEN)};
  color: #fff;
  text-align: center;
  line-height: 18px;
  font-size: 12px;
`;
const VScroll = styled.div`
  width: 9px;
  background: #20362a;
  display: flex;
  flex-direction: column;
  gap: 1px;
`;
const VScrollEnd = styled.div`
  margin-top: auto;
`;
const HScroll = styled.div`
  height: 11px;
  width: 1228px;
  flex: none;
  padding: 1px 9px 2px 0;
  border-bottom: 1px solid #000;
  display: flex;
  gap: 1px;
  background-color: #2a2a2a;
`;
const HThumb = styled.div`
  width: 688px;
  background: #00702a;
`;
const HEnd = styled.div`
  flex: 1;
  background: linear-gradient(90deg, #20362a calc(100% - 9px), #00702a calc(100% - 9px));
`;
const Summary = styled.div`
  margin-top: 2px;
  display: flex;
  gap: 10px;
  font-size: 12.500px;
  font-feature-settings: normal;
  line-height: 18px;
  color: #bbb;
  white-space: nowrap;
`;
const Kana = styled.span`
  font-feature-settings: "palt";
`;
const Minus = styled.span`
  color: #0d9a3e;
`;
const Note = styled.div`
  font-size: 10.500px;
  letter-spacing: -.5px;
  line-height: 15px;
  color: #bbb;
`;
const TabBar = styled.div`
  height: 23px;
  flex: none;
  display: flex;
  gap: 1px;
`;
const AddTab = styled.div`
  width: 53px;
  background: #444;
  display: flex;
  align-items: center;
  justify-content: center;
  gap: 6px;
`;
const BottomTab = styled.div`
  flex: 1;
  background: ${p => (p.$active ? '#000' : '#404040')};
  color: ${p => (p.$active ? '#fff' : '#ccc')};
  font-size: 11px;
  display: flex;
  align-items: center;
  justify-content: space-between;
  padding: 0 8px 0 12px;
  white-space: nowrap;
`;
